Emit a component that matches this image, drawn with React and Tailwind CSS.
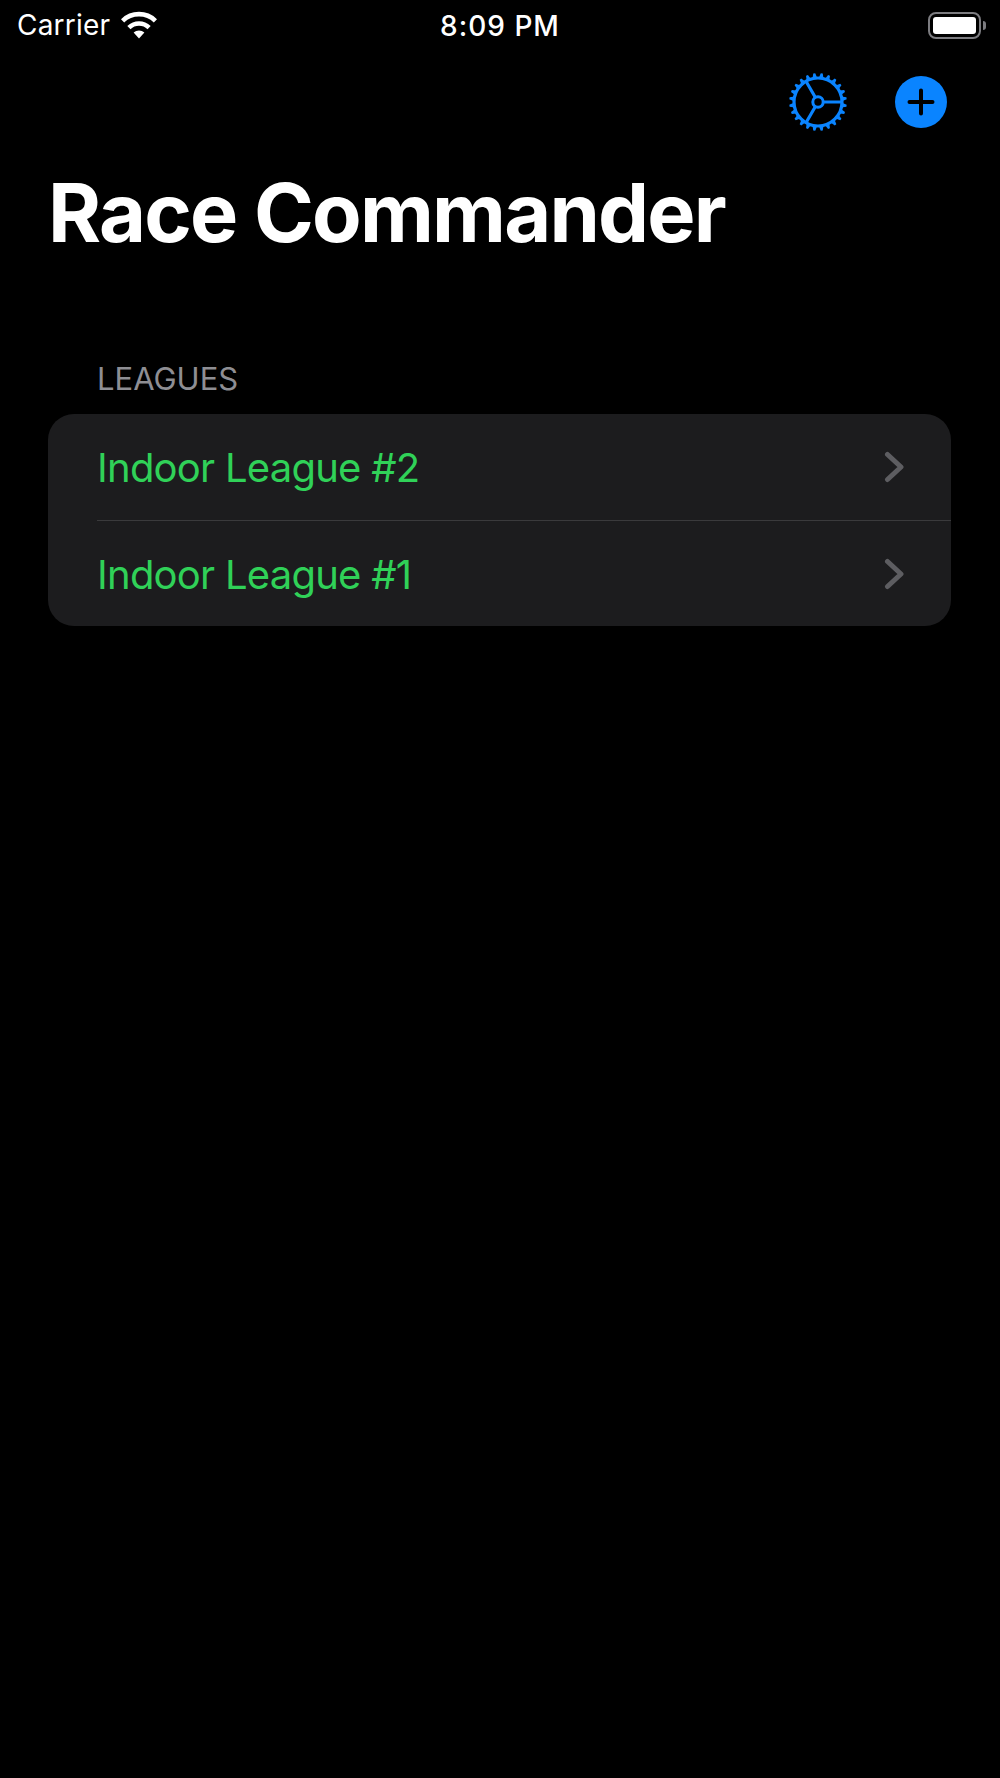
import React from 'react';

const leagues = ['Indoor League #2', 'Indoor League #1'];

const WifiIcon = () => (
  <svg width="38" height="28" viewBox="0 0 38 28" className="block">
    <path d="M19 27.5 L13.6 21.6 A8 8 0 0 1 24.4 21.6 Z" fill="#fff" />
    <path d="M8.9 16.6 A14.6 14.6 0 0 1 29.1 16.6" fill="none" stroke="#fff" strokeWidth="4.6" />
    <path d="M2.6 9.8 A23.6 23.6 0 0 1 35.4 9.8" fill="none" stroke="#fff" strokeWidth="4.6" />
  </svg>
);

const BatteryIcon = () => (
  <div className="flex items-center gap-[2px]">
    <div className="w-[53px] h-[27px] rounded-[8px] border-[2px] border-[#7c7c80] p-[3px]">
      <div className="w-full h-full rounded-[3px] bg-white" />
    </div>
    <div className="w-[3px] h-[9px] rounded-r-[3px] bg-[#7c7c80]" />
  </div>
);

// 24 small teeth round the wheel
const teeth = Array.from({ length: 24 }, (_, i) => (i * 360) / 24 + 7.5);

const GearIcon = () => (
  <svg width="60" height="60" viewBox="0 0 60 60" className="block">
    {teeth.map((a) => (
      <path key={a} d="M27.6 6 L29 1.2 L31 1.2 L32.4 6 Z" fill="#0a84ff" transform={`rotate(${a} 30 30)`} />
    ))}
    <circle cx="30" cy="30" r="24" fill="none" stroke="#0a84ff" strokeWidth="3.2" />
    <circle cx="30" cy="30" r="5.2" fill="none" stroke="#0a84ff" strokeWidth="3" />
    <path d="M35 30 H54 M27.4 25.5 L18 9.2 M27.4 34.5 L18 50.8" fill="none" stroke="#0a84ff" strokeWidth="3.2" />
  </svg>
);

const PlusIcon = () => (
  <svg width="52" height="52" viewBox="0 0 52 52" className="block">
    <circle cx="26" cy="26" r="26" fill="#0a84ff" />
    <path d="M14.5 26 H37.5 M26 14.5 V37.5" fill="none" stroke="#000" strokeWidth="4" strokeLinecap="round" />
  </svg>
);

const Chevron = () => (
  <svg width="20" height="32" viewBox="0 0 20 32" className="block">
    <path d="M3.5 3.5 L17 16 L3.5 28.5" fill="none" stroke="#5d5d61" strokeWidth="5" strokeLinecap="round" strokeLinejoin="round" />
  </svg>
);

const App = () => {
  return (
    <div className="w-[1000px] h-[1778px] bg-black text-white overflow-hidden font-['Inter',sans-serif]">
      {/* Status bar */}
      <div className="relative h-[50px] flex items-center justify-between pl-[17px] pr-[14px]">
        <div className="flex items-center gap-[10px]">
          <span className="text-[28px] leading-[32px] font-normal tracking-[0.2px]">Carrier</span>
          <WifiIcon />
        </div>
        <span className="absolute left-0 right-0 text-center text-[28px] leading-[32px] font-medium tracking-[1px] top-[10px]">8:09 PM</span>
        <BatteryIcon />
      </div>

      {/* Nav buttons */}
      <div className="h-[70px] mt-[17px] flex items-center justify-end gap-[47px] pr-[53px]">
        <GearIcon />
        <PlusIcon />
      </div>

      {/* Title */}
      <h1 className="mt-[26px] pl-[48px] text-[81px] leading-[100px] font-bold tracking-[-1.8px]">Race Commander</h1>

      {/* Section */}
      <div className="mt-[98px] pl-[97px] text-[31px] leading-[36px] text-[#8e8e93]">LEAGUES</div>
      <div className="mt-[17px] ml-[48px] w-[903px] rounded-[26px] bg-[#1c1c1e] overflow-hidden">
        {leagues.map((name, i) => (
          <div key={name} className="pl-[49px]">
            <div className={`h-[106px] flex items-center justify-between pr-[47px] ${i > 0 ? 'border-t border-[#3a3a3c]' : ''}`}>
              <span className="text-[40px] leading-[48px] tracking-[-0.75px] text-[#30d158] relative top-[1px]">{name}</span>
              <Chevron />
            </div>
          </div>
        ))}
      </div>
    </div>
  );
};

export default App;
